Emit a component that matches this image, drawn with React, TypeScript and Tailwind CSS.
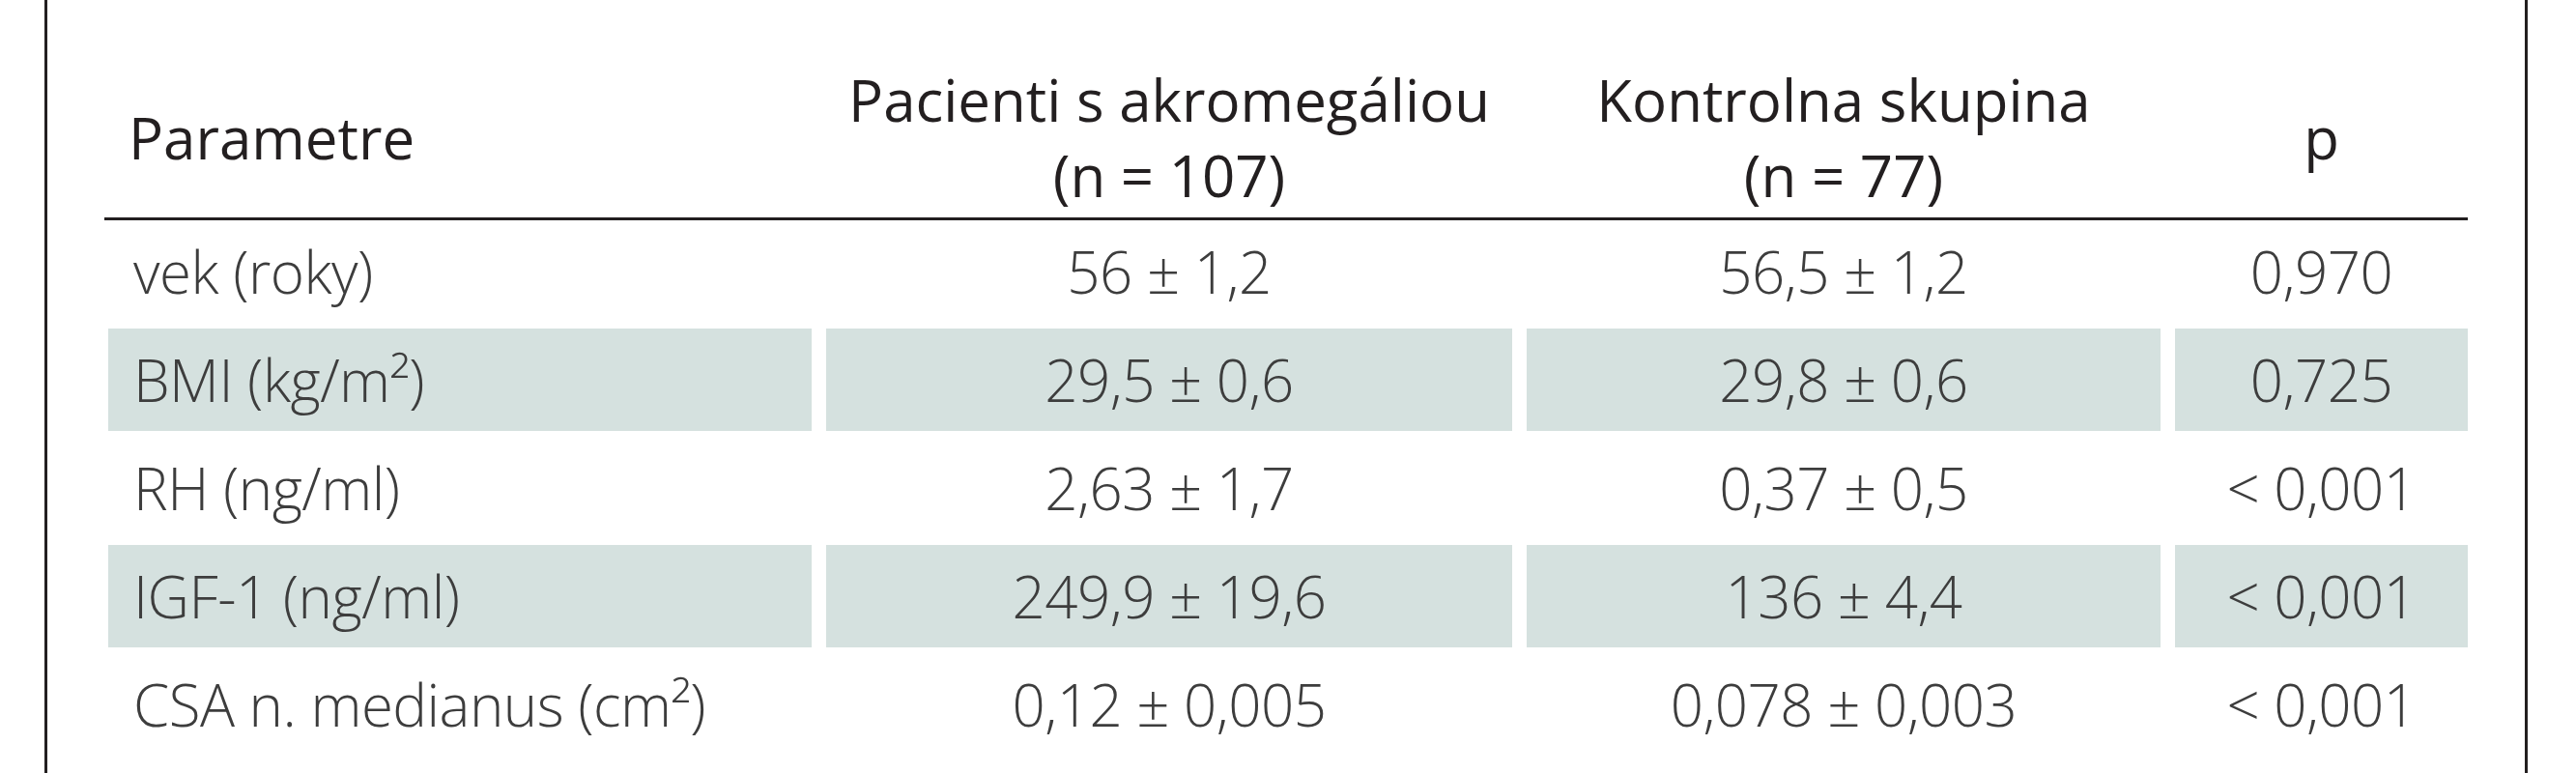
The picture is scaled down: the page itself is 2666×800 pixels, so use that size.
type Row = { label: string; a: string; b: string; p: string; shaded?: boolean };

const ROWS: Row[] = [
  { label: "vek (roky)", a: "56 ± 1,2", b: "56,5 ± 1,2", p: "0,970" },
  { label: "BMI (kg/m²)", a: "29,5 ± 0,6", b: "29,8 ± 0,6", p: "0,725", shaded: true },
  { label: "RH (ng/ml)", a: "2,63 ± 1,7", b: "0,37 ± 0,5", p: "< 0,001" },
  { label: "IGF-1 (ng/ml)", a: "249,9 ± 19,6", b: "136 ± 4,4", p: "< 0,001", shaded: true },
  { label: "CSA n. medianus (cm²)", a: "0,12 ± 0,005", b: "0,078 ± 0,003", p: "< 0,001" },
];

const GRID = "grid grid-cols-[732px_710px_656px_303px] gap-x-[15px]";

function Cell({ children, shaded, left }: { children: React.ReactNode; shaded?: boolean; left?: boolean }) {
  return (
    <div
      className={`flex h-[106px] items-center ${left ? "ml-[4px] pl-[26px]" : "justify-center"} ${
        shaded ? "bg-[#d5e1df]" : ""
      }`}
    >
      {children}
    </div>
  );
}

export default function App() {
  return (
    <div className="h-[800px] w-[2666px] bg-white pl-[46px] pr-[50px]">
      <div className="h-full border-x-[3px] border-[#231f20] px-[59px]">
        {/* header */}
        <div
          className={`${GRID} h-[228px] border-b-[3px] border-[#231f20] pt-[58px] font-['Open_Sans',sans-serif] text-[60px] leading-[78px] text-[#231f20]`}
        >
          <div className="flex items-center pl-[25px]">Parametre</div>
          <div className="flex flex-col items-center justify-center text-center">
            <span>Pacienti s akromegáliou</span>
            <span>(n = 107)</span>
          </div>
          <div className="flex flex-col items-center justify-center text-center">
            <span>Kontrolna skupina</span>
            <span>(n = 77)</span>
          </div>
          <div className="flex items-center justify-center">p</div>
        </div>

        {/* body */}
        <div className="font-['Open_Sans',sans-serif] text-[60px] font-light leading-none tracking-[-0.5px] text-[#3d3d3d]">
          {ROWS.map((r, i) => (
            <div key={i} className={`${GRID} h-[112px]`}>
              <Cell shaded={r.shaded} left>
                {r.label}
              </Cell>
              <Cell shaded={r.shaded}>{r.a}</Cell>
              <Cell shaded={r.shaded}>{r.b}</Cell>
              <Cell shaded={r.shaded}>{r.p}</Cell>
            </div>
          ))}
        </div>
      </div>
    </div>
  );
}
